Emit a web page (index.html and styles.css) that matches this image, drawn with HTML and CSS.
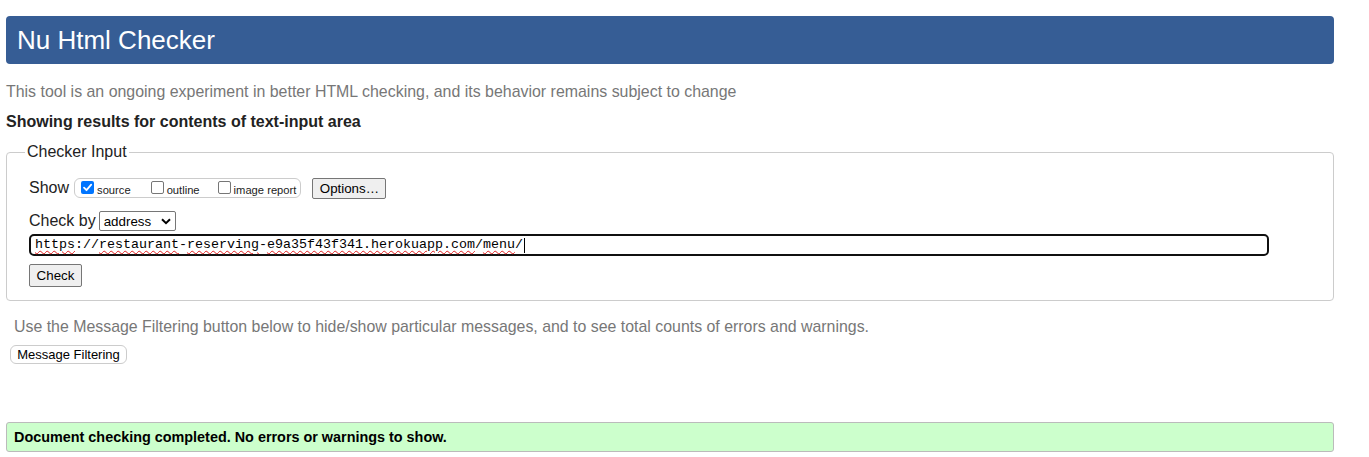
FILE: index.html
```html
<!DOCTYPE html>
<html lang="en">
<head>
<meta charset="utf-8">
<title>Nu Html Checker</title>
<link rel="stylesheet" href="styles.css">
</head>
<body>
<div class="page">
  <h1 class="title">Nu Html Checker</h1>
  <p class="intro">This tool is an ongoing experiment in better HTML checking, and its behavior remains subject to change</p>
  <p class="showing">Showing results for contents of text-input area</p>
  <fieldset class="checker">
    <legend class="legend">Checker Input</legend>
    <div class="row show-row">
      <span class="label">Show</span>
      <span class="show-box">
        <label class="opt"><span class="cb checked"><svg viewBox="0 0 13 13" width="13" height="13"><rect x="0" y="0" width="13" height="13" rx="2" fill="#0075ff"/><path d="M3 6.6 L5.5 9.2 L10.2 3.6" fill="none" stroke="#fff" stroke-width="1.8" stroke-linecap="round" stroke-linejoin="round"/></svg></span><span class="opt-text">source</span></label>
        <label class="opt"><span class="cb"></span><span class="opt-text">outline</span></label>
        <label class="opt"><span class="cb"></span><span class="opt-text">image report</span></label>
      </span>
      <button class="btn options">Options…</button>
    </div>
    <div class="row by-row">
      <span class="label">Check by</span>
      <span class="select">address<svg class="chev" viewBox="0 0 10 7" width="10" height="7"><path d="M1 1.2 L5 5.2 L9 1.2" fill="none" stroke="#000" stroke-width="2"/></svg></span>
    </div>
    <div class="url-input"><span class="sp">https</span>://<span class="sp">restaurant</span>-<span class="sp">reserving</span>-<span class="sp">e9a35f43f341.herokuapp.com</span>/<span class="sp">menu</span>/<span class="caret"></span></div>
    <div class="row check-row">
      <button class="btn check">Check</button>
    </div>
  </fieldset>
  <p class="filter-note">Use the Message Filtering button below to hide/show particular messages, and to see total counts of errors and warnings.</p>
  <button class="btn filter">Message Filtering</button>
  <div class="success">Document checking completed. No errors or warnings to show.</div>
</div>
</body>
</html>
```
FILE: styles.css
```css
html, body {
  margin: 0;
  padding: 0;
  background: #fff;
}
body {
  font-family: "Liberation Sans", Arial, sans-serif;
  color: #222;
}
.page {
  width: 1328px;
  margin-left: 6px;
  padding-top: 16px;
}
.title {
  margin: 0;
  height: 48px;
  box-sizing: border-box;
  background: #365d95;
  color: #fff;
  font-weight: normal;
  font-size: 26px;
  line-height: 48px;
  padding-left: 11px;
  border-radius: 4px;
}
.intro {
  margin: 19px 0 0 0;
  font-size: 15.93px;
  line-height: 18px;
  color: #777;
}
.showing {
  margin: 12px 0 0 0;
  font-size: 16px;
  line-height: 18px;
  font-weight: bold;
  color: #222;
}
.checker {
  margin: 12px 0 0 0;
  padding: 6px 22px 13px 22px;
  border: 1px solid #ccc;
  border-radius: 4px;
  min-width: 0;
}
.legend {
  font-size: 16px;
  line-height: 18px;
  padding: 0 2px;
  margin-left: -4px;
  color: #222;
}
.row {
  display: flex;
  align-items: center;
}
.label {
  font-size: 16px;
  color: #222;
  white-space: nowrap;
}
.show-row {
  height: 20px;
  margin-top: 11px;
}
.show-box {
  display: flex;
  align-items: center;
  flex-shrink: 0;
  height: 20px;
  box-sizing: border-box;
  margin-left: 5px;
  padding: 0 4px 0 6px;
  border: 1px solid #ccc;
  border-radius: 6px;
}
.opt {
  display: flex;
  align-items: center;
  flex-shrink: 0;
  white-space: nowrap;
  font-size: 11.2px;
  color: #222;
}
.opt + .opt {
  margin-left: 20px;
}
.opt:last-child {
  margin-left: 18px;
}
.cb {
  display: inline-block;
  flex-shrink: 0;
  width: 13px;
  height: 13px;
  box-sizing: border-box;
  border: 1px solid #767676;
  border-radius: 2px;
  margin-right: 3px;
  margin-top: -2px;
}
.cb.checked {
  border: none;
}
.cb svg {
  display: block;
}
.opt-text {
  margin-top: 3px;
}
.btn {
  font-family: "Liberation Sans", Arial, sans-serif;
  font-size: 13.333px;
  color: #000;
  background: #efefef;
  border: 1px solid #767676;
  border-radius: 2px;
  padding: 1px 6px;
  margin: 0;
  box-sizing: border-box;
  white-space: nowrap;
}
.options {
  margin-left: 11px;
  height: 21px;
  width: 74px;
  flex-shrink: 0;
}
.by-row {
  margin-top: 13px;
  height: 20px;
}
.select {
  display: inline-flex;
  align-items: center;
  justify-content: space-between;
  margin-left: 3px;
  width: 77px;
  height: 20px;
  box-sizing: border-box;
  border: 1px solid #767676;
  border-radius: 2px;
  padding: 0 4px 0 4px;
  font-size: 13.333px;
  color: #000;
  background: #fff;
}
.chev {
  display: block;
}
.url-input {
  margin-top: 3px;
  width: 1240px;
  height: 22px;
  box-sizing: border-box;
  border: 2px solid #101010;
  border-radius: 5px;
  padding: 0 0 0 4px;
  font-family: "Liberation Mono", "DejaVu Sans Mono", monospace;
  font-size: 13.333px;
  line-height: 18px;
  color: #000;
  white-space: pre;
  display: flex;
  align-items: center;
}
.sp {
  text-decoration: underline wavy #e02020;
  text-decoration-thickness: 1px;
  text-underline-offset: 2px;
}
.caret {
  display: inline-block;
  width: 1px;
  height: 15px;
  background: #000;
  margin-left: 1px;
}
.check-row {
  margin-top: 8px;
}
.check {
  height: 23px;
  width: 53px;
}
.filter-note {
  margin: 17px 0 0 8px;
  font-size: 15.9px;
  line-height: 18px;
  color: #777;
}
.filter {
  display: block;
  margin: 9px 0 0 4px;
  background: #fff;
  border: 1px solid #ccc;
  border-radius: 6px;
  height: 19px;
  width: 117px;
  padding: 0 5px;
  font-size: 13px;
}
.success {
  margin-top: 58px;
  height: 30px;
  box-sizing: border-box;
  background: #ccffcc;
  border: 1px solid #bbb;
  border-radius: 3px;
  padding-left: 7px;
  font-size: 14.4px;
  font-weight: bold;
  line-height: 28px;
  color: #000;
}
```
